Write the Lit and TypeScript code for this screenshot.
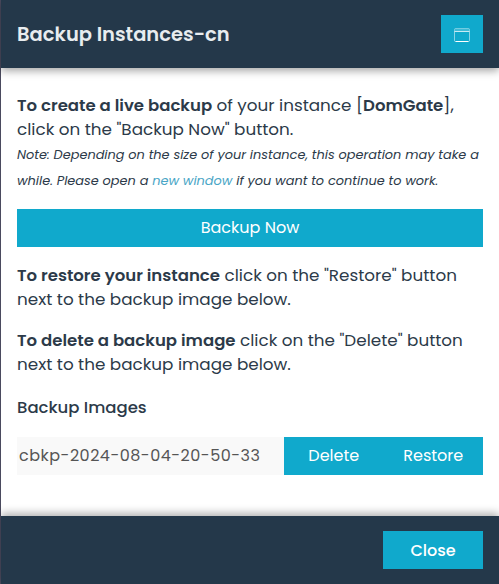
import { LitElement, html, css } from "lit";
import { customElement } from "lit/decorators.js";

@customElement("app-root")
export class AppRoot extends LitElement {
  static styles = css`
    :host { display: block; width: 499px; height: 584px; font-family: Poppins, "Open Sans", "Noto Sans", sans-serif; color: #2c3a49; overflow: hidden; background: #fff; }
    .dialog { display: flex; flex-direction: column; height: 584px; border-left: 1px solid #4a4a5e; box-sizing: border-box; }
    .head { height: 68px; background: #24384a; display: flex; align-items: center; justify-content: space-between; padding: 0 16px; box-shadow: 0 3px 8px rgba(0,0,0,.35); flex: none; position: relative; }
    .head h1 { margin: 0; font-size: 19.5px; font-weight: 600; color: #e8ecef; white-space: nowrap; }
    .icon-btn { width: 42px; height: 38px; background: #10a9cc; border: 0; display: flex; align-items: center; justify-content: center; padding: 1px 0 0; }
    .body { flex: 1; padding: 25px 16px 0; font-size: 16.8px; line-height: 24px; }
    p { margin: 0; white-space: nowrap; }
    b { font-weight: 600; font-size: 16.55px; line-height: 1; }
    .note { font-size: 12.9px; font-style: italic; line-height: 26px; margin-top: 1px; }
    .note a { color: #4aa6c6; text-decoration: none; }
    .wide { display: block; width: 100%; height: 38px; margin: 15px 0 16px; background: #10a9cc; border: 0; color: #fff; font: inherit; font-size: 16px; }
    .mt { margin-top: 17px; }
    .sub { margin-top: 20px; font-weight: 500; font-size: 16.5px; }
    .row { display: flex; height: 38px; margin-top: 17px; font-size: 16px; }
    .name { flex: 1; background: #f9f9f9; display: flex; align-items: center; padding-left: 2px; color: #555; letter-spacing: .5px; white-space: nowrap; }
    .actions { display: flex; background: #10a9cc; color: #fff; width: 199px; align-items: center; }
    .actions span { flex: 1; text-align: center; }
    .foot { height: 68px; background: #24384a; display: flex; align-items: center; justify-content: flex-end; padding: 0 16px; box-shadow: 0 -3px 8px rgba(0,0,0,.3); flex: none; position: relative; }
    .close { width: 100px; height: 38px; background: #10a9cc; color: #fff; border: 0; font: inherit; font-size: 16px; font-weight: 500; }
  `;
  render() {
    return html`<div class="dialog">
      <div class="head"><h1>Backup Instances-cn</h1>
        <button class="icon-btn"><svg width="16" height="14" viewBox="0 0 16 14" fill="none" stroke="#fff" stroke-width="1"><path d="M.5 3.5V1.5a1 1 0 0 1 1-1h13a1 1 0 0 1 1 1v2" fill="#fff" fill-opacity=".2" stroke-opacity=".35"/><path d="M.5 3.5v9a1 1 0 0 0 1 1M15.5 3.5v9a1 1 0 0 1-1 1" stroke-opacity=".5"/><path d="M.5 3.5h15" stroke-opacity=".75"/><path d="M1.5 13.5h13"/></svg></button></div>
      <div class="body">
        <p><b>To create a live backup</b> of your instance [<b>DomGate</b>],<br />click on the "Backup Now" button.</p>
        <p class="note">Note: Depending on the size of your instance, this operation may take a<br />while. Please open a <a>new window</a> if you want to continue to work.</p>
        <button class="wide">Backup Now</button>
        <p><b>To restore your instance</b> click on the "Restore" button<br />next to the backup image below.</p>
        <p class="mt"><b>To delete a backup image</b> click on the "Delete" button<br />next to the backup image below.</p>
        <p class="sub">Backup Images</p>
        <div class="row"><div class="name">cbkp-2024-08-04-20-50-33</div><div class="actions"><span>Delete</span><span>Restore</span></div></div>
      </div>
      <div class="foot"><button class="close">Close</button></div>
    </div>`;
  }
}
